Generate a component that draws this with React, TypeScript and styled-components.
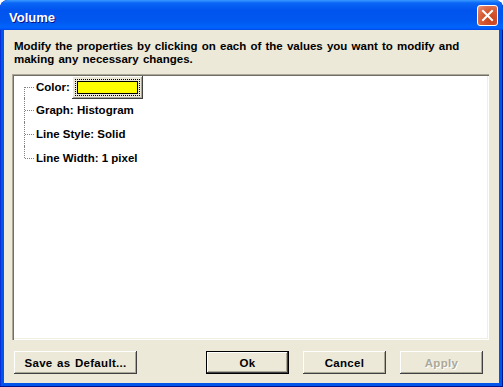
import React from "react";
import styled, { createGlobalStyle, css } from "styled-components";

const Global = createGlobalStyle`
  html, body { margin: 0; padding: 0; background: #ffffff; }
  #root { width: 503px; height: 387px; }
  * { box-sizing: border-box; }
`;

const Window = styled.div`
  width: 503px;
  height: 387px;
  display: flex;
  flex-direction: column;
  background: #0055ea;
  border-radius: 8px 8px 0 0;
  overflow: hidden;
  box-shadow: inset -1px -1px #00138c, inset 1px 0 #0831d9;
  font-family: "Liberation Sans", Arial, sans-serif;
`;

const TitleBar = styled.div`
  height: 30px;
  flex: none;
  display: flex;
  align-items: center;
  justify-content: space-between;
  padding: 1px 5px 0 9px;
  background: linear-gradient(
    180deg,
    #3a9bff 0%,
    #0a66f6 10%,
    #0053ee 35%,
    #0058f0 70%,
    #0064fa 90%,
    #005bff 95%,
    #0047e0 100%
  );
  border-radius: 8px 8px 0 0;
`;

const Title = styled.span`
  color: #ffffff;
  font-weight: bold;
  font-size: 13px;
  padding-top: 4px;
  text-shadow: 1px 1px #0f1089;
`;

const CloseButton = styled.div`
  width: 21px;
  height: 21px;
  border: 1px solid #ffffff;
  border-radius: 3px;
  display: flex;
  align-items: center;
  justify-content: center;
  background: radial-gradient(
    circle at 70% 75%,
    #c8401c 0%,
    #d65a33 50%,
    #e2795a 80%,
    #f0a58d 100%
  );
`;

const Client = styled.div`
  flex: 1;
  margin: 0 4px 4px 4px;
  background: #ece9d8;
  display: flex;
  flex-direction: column;
  padding: 10px 0 9px 0;
`;

const Instructions = styled.div`
  margin: 0 10px 0 10px;
  font-size: 11.5px;
  font-weight: bold;
  line-height: 13px;
  word-spacing: 1px;
  color: #000000;
`;

const TreeBox = styled.div`
  flex: 1;
  margin: 8px 10px 0 8px;
  background: #ffffff;
  box-shadow: inset 1px 1px #aca899, inset 2px 2px #716f64, inset -1px -1px #ffffff,
    inset -2px -2px #f1efe2;
  padding: 2px;
`;

const TreeRow = styled.div<{ $first?: boolean; $last?: boolean }>`
  position: relative;
  height: ${(p) => (p.$first ? 22 : 24)}px;
  display: flex;
  align-items: center;
  gap: 0;
  padding-left: 22px;
  font-size: 11.5px;
  font-weight: bold;
  color: #000000;

  &::before {
    content: "";
    position: absolute;
    left: 10px;
    top: ${(p) => (p.$first ? "50%" : "0")};
    bottom: ${(p) => (p.$last ? "50%" : "0")};
    border-left: 1px dotted #808080;
  }

  &::after {
    content: "";
    position: absolute;
    left: 11px;
    top: 50%;
    width: 9px;
    border-top: 1px dotted #808080;
  }
`;

const SwatchButton = styled.div`
  width: 71px;
  height: 23px;
  padding: 3px;
  flex: none;
  margin-left: 2px;
  background: #ece9d8;
  box-shadow: inset -1px -1px #404040, inset 1px 1px #ffffff, inset -2px -2px #aca899,
    inset 2px 2px #ece9d8;
`;

const FocusRing = styled.div`
  width: 100%;
  height: 100%;
  border: 1px dotted #000000;
  padding: 1px;
`;

const Swatch = styled.div<{ $color: string }>`
  width: 100%;
  height: 100%;
  border: 1px solid #000000;
  background: ${(p) => p.$color};
`;

const ButtonRow = styled.div`
  display: flex;
  align-items: center;
  margin-top: 11px;
  padding: 0 16px 0 10px;
`;

const Spacer = styled.div`
  flex: 1;
`;

const ButtonGroup = styled.div`
  display: flex;
  gap: 14px;
`;

const Button = styled.div<{ $width: number; $default?: boolean; $disabled?: boolean }>`
  width: ${(p) => p.$width}px;
  height: 23px;
  display: flex;
  align-items: center;
  justify-content: center;
  background: #ece9d8;
  font-size: 11.5px;
  font-weight: bold;
  letter-spacing: 0.3px;
  word-spacing: 1px;
  color: #000000;
  box-shadow: inset -1px -1px #404040, inset 1px 1px #ffffff, inset -2px -2px #aca899;
  ${(p) =>
    p.$default &&
    css`
      box-shadow: inset 0 0 0 1px #000000, inset -2px -2px #404040, inset 2px 2px #ffffff,
        inset -3px -3px #aca899;
    `}
  ${(p) =>
    p.$disabled &&
    css`
      color: #aca899;
      text-shadow: 1px 1px #ffffff;
    `}
`;

export default function App() {
  return (
    <>
      <Global />
      <Window>
        <TitleBar>
          <Title>Volume</Title>
          <CloseButton>
            <svg width="13" height="13" viewBox="0 0 13 13">
              <path d="M2 2 L11 11 M11 2 L2 11" stroke="#ffffff" strokeWidth="2" strokeLinecap="square" />
            </svg>
          </CloseButton>
        </TitleBar>
        <Client>
          <Instructions>
            Modify the properties by clicking on each of the values you want to modify and
            <br />
            making any necessary changes.
          </Instructions>
          <TreeBox>
            <TreeRow $first>
              <span>Color:</span>
              <SwatchButton>
                <FocusRing>
                  <Swatch $color="#ffff00" />
                </FocusRing>
              </SwatchButton>
            </TreeRow>
            <TreeRow>Graph: Histogram</TreeRow>
            <TreeRow>Line Style: Solid</TreeRow>
            <TreeRow $last>Line Width: 1 pixel</TreeRow>
          </TreeBox>
          <ButtonRow>
            <Button $width={123}>Save as Default...</Button>
            <Spacer />
            <ButtonGroup>
              <Button $width={83} $default>
                Ok
              </Button>
              <Button $width={83}>Cancel</Button>
              <Button $width={83} $disabled>
                Apply
              </Button>
            </ButtonGroup>
          </ButtonRow>
        </Client>
      </Window>
    </>
  );
}
